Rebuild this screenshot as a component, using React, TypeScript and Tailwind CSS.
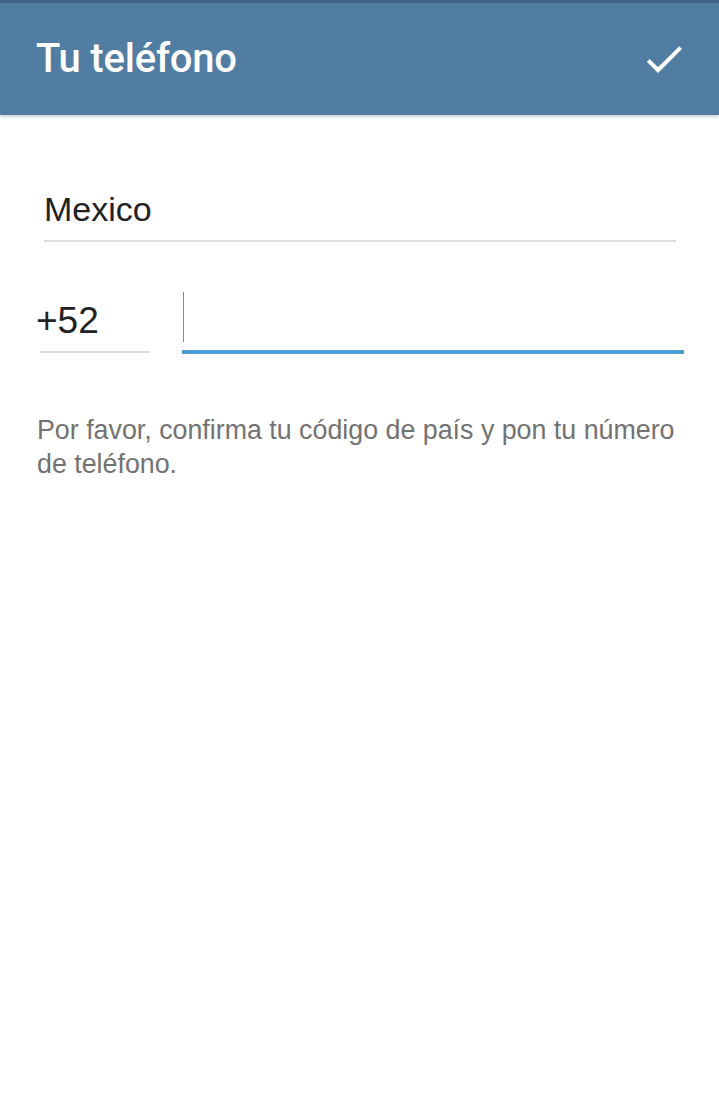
export default function App() {
  return (
    <div className="flex min-h-[1119px] w-full flex-col bg-white font-['Liberation_Sans',Arial,sans-serif]">
      {/* Action bar */}
      <header className="relative z-10 flex h-[115px] items-center justify-between border-t-[3px] border-[#3f6486] bg-[#527da3] pl-[36px] pr-[31px] shadow-[0_2px_3px_rgba(0,0,0,0.18)]">
        <h1 className="font-['Roboto',sans-serif] text-[40px] font-medium leading-none tracking-[-0.2px] text-white">
          Tu teléfono
        </h1>
        <svg viewBox="0 0 24 24" className="h-[48px] w-[48px] fill-white">
          <path d="M9 16.17 4.83 12l-1.42 1.41L9 19 21 7l-1.41-1.41z" />
        </svg>
      </header>

      {/* Country */}
      <div className="ml-[44px] mr-[43px] mt-[75px] border-b-2 border-[#dedede] pb-[12px]">
        <div className="text-[34px] leading-[38px] text-[#222222]">Mexico</div>
      </div>

      {/* Code + number */}
      <div className="mt-[50px] flex items-end pr-[35px]">
        <div className="mb-[1px] ml-[40px] w-[110px] border-b-2 border-[#dedede] pb-[11px]">
          <div className="-ml-[4px] text-[37px] leading-[38px] text-[#222222]">+52</div>
        </div>
        <div className="ml-[32px] flex-1 border-b-4 border-[#4a9fd2] pb-[8px]">
          <div className="ml-[1px] h-[50px] w-px bg-[#8a8a8a]" />
        </div>
      </div>

      <p className="mt-[59px] pl-[37px] pr-[35px] text-[26.8px] leading-[34px] text-[#727272]">
        Por favor, confirma tu código de país y pon tu número de teléfono.
      </p>
    </div>
  );
}
